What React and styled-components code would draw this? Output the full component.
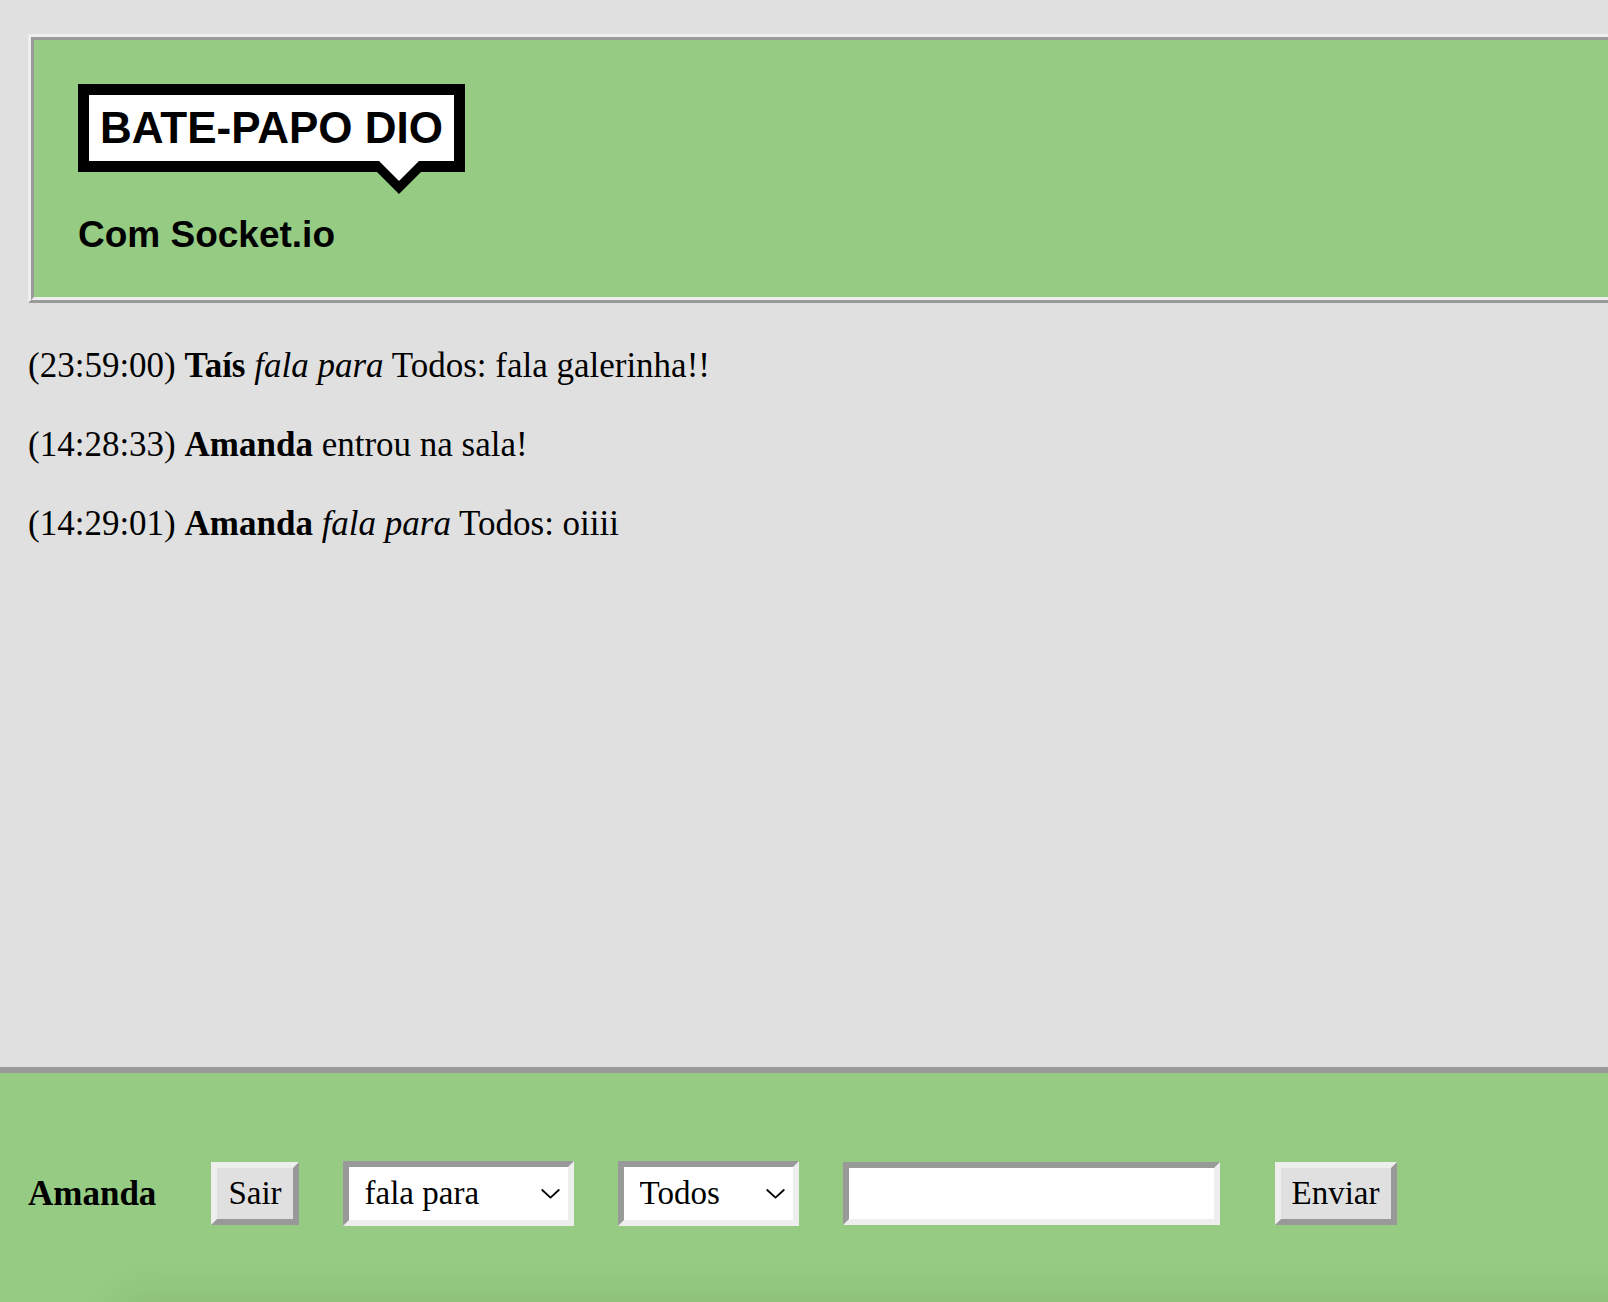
import React, { useState } from "react";
import styled, { createGlobalStyle } from "styled-components";

const GlobalStyle = createGlobalStyle`
  * {
    box-sizing: border-box;
  }

  body {
    margin: 0;
    background: #e0e0e0;
    color: #000;
    font-family: "Liberation Serif", "Times New Roman", serif;
    font-size: 35px;
    line-height: 40px;
  }
`;

const Page = styled.div`
  display: flex;
  flex-direction: column;
  min-height: 100vh;
  overflow-x: hidden;
`;

const Header = styled.header`
  display: flex;
  flex-direction: column;
  align-items: flex-start;
  gap: 44px;
  margin: 34px 0 0 28px;
  padding: 44px;
  border: 6px ridge #eee;
  border-right: 0;
  background: #95cb83;
  font-family: "Liberation Sans", Arial, sans-serif;
`;

const Title = styled.h1`
  position: relative;
  margin: 0;
  padding: 11px;
  border: 11px solid #000;
  background: #fff;
  font-size: 44px;
  line-height: 44px;
`;

const BubbleTail = styled.svg`
  position: absolute;
  top: 100%;
  right: 33px;
  width: 44px;
  height: 33px;
`;

const Subtitle = styled.h2`
  margin: 0;
  font-size: 37px;
  line-height: 37px;
`;

const Messages = styled.main`
  display: flex;
  flex: 1;
  flex-direction: column;
  gap: 39px;
  padding: 43px 28px;
`;

const Message = styled.p`
  margin: 0;
`;

const Footer = styled.footer`
  position: relative;
  display: flex;
  align-items: center;
  padding: 88px 28px 76px;
  border-top: 6px solid #999;
  background: #95cb82;
  overflow: hidden;

  &::after {
    content: "";
    position: absolute;
    top: 100%;
    right: -40px;
    left: 120px;
    height: 40px;
    box-shadow: 0 0 50px rgba(0, 0, 0, 0.09);
    pointer-events: none;
  }
`;

const UserName = styled.strong`
  margin-right: 55px;
`;

const Form = styled.form`
  display: flex;
  align-items: center;
  gap: 44px;
`;

const Button = styled.button`
  margin: 0 0 0 ${({ $spaced }) => ($spaced ? "11px" : "0")};
  padding: 6px 11px;
  border: 6px solid;
  border-color: #eee #999 #999 #eee;
  border-radius: 0;
  background: #e0e0e0;
  color: #000;
  font: 33px/39px "Liberation Serif", "Times New Roman", serif;
`;

const SelectBox = styled.div`
  position: relative;
  width: ${({ $width }) => $width};
`;

const Select = styled.select`
  appearance: none;
  display: block;
  width: 100%;
  height: 65px;
  padding: 0 40px 0 16px;
  border: 6px solid;
  border-color: #999 #eee #eee #999;
  border-radius: 0;
  background: #fff;
  color: #000;
  font: 33px/39px "Liberation Serif", "Times New Roman", serif;
`;

const Chevron = styled.svg`
  position: absolute;
  top: 28px;
  right: 14px;
  width: 19px;
  height: 10px;
  pointer-events: none;
`;

const MessageInput = styled.input`
  width: 377px;
  height: 63px;
  padding: 0 11px;
  border: 6px solid;
  border-color: #999 #eee #eee #999;
  border-radius: 0;
  background: #fff;
  font: 33px/39px "Liberation Serif", "Times New Roman", serif;
`;

const messages = [
  { time: "23:59:00", author: "Taís", action: "fala para", text: "Todos: fala galerinha!!" },
  { time: "14:28:33", author: "Amanda", text: "entrou na sala!" },
  { time: "14:29:01", author: "Amanda", action: "fala para", text: "Todos: oiiii" },
];

function Dropdown({ label, width, options }) {
  return (
    <SelectBox $width={width}>
      <Select aria-label={label}>
        {options.map((option) => (
          <option key={option}>{option}</option>
        ))}
      </Select>
      <Chevron viewBox="0 0 19 10" aria-hidden="true">
        <path
          d="M1.2 1 L9.5 8.7 L17.8 1"
          fill="none"
          stroke="#000"
          strokeWidth="1.8"
          strokeLinecap="round"
          strokeLinejoin="round"
        />
      </Chevron>
    </SelectBox>
  );
}

export default function App() {
  const [text, setText] = useState("");

  return (
    <Page>
      <GlobalStyle />
      <Header>
        <Title>
          BATE-PAPO DIO
          <BubbleTail viewBox="0 0 44 33" aria-hidden="true">
            <path d="M0 11 H44 L22 33 Z" fill="#000" />
            <path d="M2 0 H42 L22 20 Z" fill="#fff" />
          </BubbleTail>
        </Title>
        <Subtitle>Com Socket.io</Subtitle>
      </Header>
      <Messages>
        {messages.map(({ time, author, action, text: body }) => (
          <Message key={time}>
            ({time}) <strong>{author}</strong> {action && <em>{action}</em>}
            {action && " "}
            {body}
          </Message>
        ))}
      </Messages>
      <Footer>
        <UserName>Amanda</UserName>
        <Form onSubmit={(event) => event.preventDefault()}>
          <Button type="button">Sair</Button>
          <Dropdown label="Ação" width="231px" options={["fala para"]} />
          <Dropdown label="Destinatário" width="181px" options={["Todos"]} />
          <MessageInput
            aria-label="Mensagem"
            value={text}
            onChange={(event) => setText(event.target.value)}
          />
          <Button type="submit" $spaced>
            Enviar
          </Button>
        </Form>
      </Footer>
    </Page>
  );
}
